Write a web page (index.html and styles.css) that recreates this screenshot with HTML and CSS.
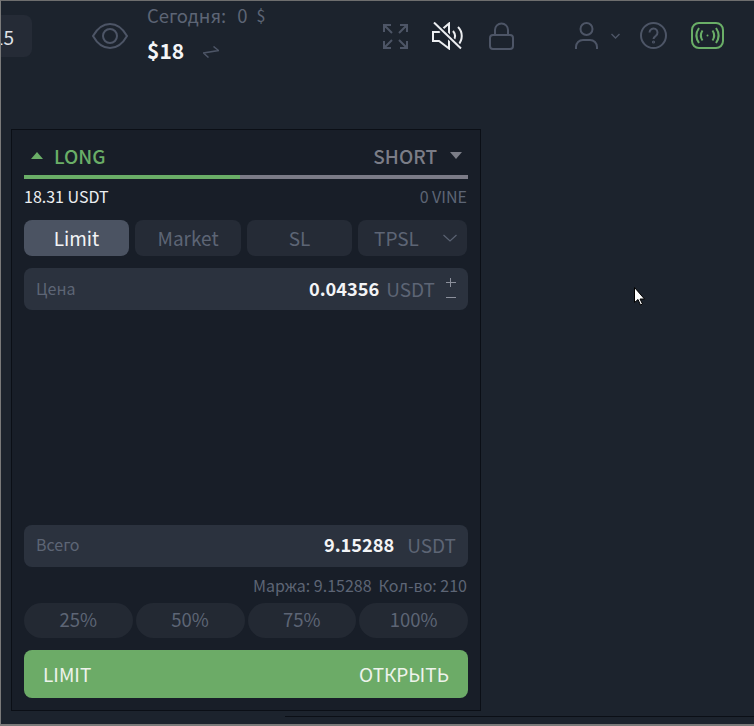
FILE: index.html
```html
<!DOCTYPE html>
<html lang="ru">
<head>
<meta charset="utf-8">
<title>Trade</title>
<link rel="stylesheet" href="styles.css">
</head>
<body>
<div class="frame">
  <header class="topbar">
    <div class="leverage"><span>15</span></div>
    <svg class="ic-eye" width="36" height="28" viewBox="0 0 36 28" fill="none" stroke="#4d5566" stroke-width="2"><path d="M1 14C5.500 6 11.500 2 18 2s12.500 4 17 12C30.500 22 24.500 26 18 26S5.500 22 1 14z"/><circle cx="18" cy="14" r="7"/></svg>
    <div class="stats">
      <div class="today"><span>Сегодня:</span><span class="today-val">0</span><span class="today-cur">$</span></div>
      <div class="balance"><span>$18</span>
        <svg width="16" height="12" viewBox="0 0 16 12" fill="none" stroke="#4d5566" stroke-width="1.500"><path d="M10.500.500l5 4-15 2.500 5 4.500"/></svg>
      </div>
    </div>
    <div class="tools">
      <svg width="25" height="25" viewBox="0 0 25 25" fill="none" stroke="#4d5566" stroke-width="2"><path d="M1 8V1h7M1 1l8 8M17 1h7v7M24 1l-8 8M1 17v7h7M1 24l8-8M24 17v7h-7M24 24l-8-8"/></svg>
      <svg class="ic-sound" width="33" height="28" viewBox="0 0 33 28" fill="none" stroke="#eceef1" stroke-width="2"><path d="M1 10h6L17 1.500v25L7 19H1z"/><path d="M21 9c2.500 3 2.500 7 0 10M26 5c5 5 5 13 0 18"/><path d="M2 .5l27 26" stroke="#1c232e" stroke-width="5"/><path d="M2 .5l27 26"/></svg>
      <svg width="25" height="28" viewBox="0 0 25 28" fill="none" stroke="#4d5566" stroke-width="2"><rect x="1" y="13" width="23" height="14" rx="3"/><path d="M6 13V8a6.500 6.500 0 0 1 13 0v5"/></svg>
    </div>
    <div class="account">
      <svg width="23" height="27" viewBox="0 0 23 27" fill="none" stroke="#4d5566" stroke-width="2"><circle cx="11.500" cy="7" r="6"/><path d="M1 27v-2a7 7 0 0 1 7-7h7a7 7 0 0 1 7 7v2"/></svg>
      <svg class="ic-caret" width="9" height="6" viewBox="0 0 9 6" fill="none" stroke="#4d5566" stroke-width="1.400"><path d="M.5 1l4 4 4-4"/></svg>
    </div>
    <svg class="ic-help" width="27" height="27" viewBox="0 0 27 27" fill="none" stroke="#4d5566" stroke-width="2"><circle cx="13.500" cy="13.500" r="12.500"/><path d="M9.500 10.500a4 4 0 1 1 6.300 3.300c-1.500 1-2.300 1.700-2.300 3.200"/><circle cx="13.500" cy="20" r=".6"/></svg>
    <svg class="ic-signal" width="33" height="27" viewBox="0 0 33 27" fill="none" stroke="#6aae67" stroke-width="2"><rect x="1" y="1" width="31" height="25" rx="7"/><path d="M11.500 8.500c-2 3-2 7 0 10M21.500 8.500c2 3 2 7 0 10M8 6c-3.500 5-3.500 10 0 15M25 6c3.500 5 3.500 10 0 15"/><circle cx="16.500" cy="13.500" r="1" fill="#6aae67" stroke="none"/></svg>
  </header>

  <section class="panel">
    <div class="sides">
      <div class="side side-long"><svg width="12" height="7" viewBox="0 0 12 7"><path d="M6 0l6 7H0z" fill="#6aae67"/></svg><span>LONG</span></div>
      <div class="side side-short"><span>SHORT</span><svg width="12" height="7" viewBox="0 0 12 7"><path d="M0 0h12L6 7z" fill="#7b7d87"/></svg></div>
    </div>
    <div class="ratio"><div class="ratio-fill"></div></div>
    <div class="funds"><span class="funds-long">18.31 USDT</span><span class="funds-short">0 VINE</span></div>
    <div class="types">
      <div class="type type-active">Limit</div>
      <div class="type">Market</div>
      <div class="type">SL</div>
      <div class="type type-more"><span>TPSL</span><svg width="14" height="8" viewBox="0 0 14 8" fill="none" stroke="#5a6272" stroke-width="1.200"><path d="M.5 1L7 7l6.500-6"/></svg></div>
    </div>
    <div class="field">
      <span class="field-label">Цена</span>
      <span class="field-value">0.04356</span>
      <span class="field-unit">USDT</span>
      <span class="stepper"><i class="plus"></i><i class="minus"></i></span>
    </div>
    <div class="spacer"></div>
    <div class="field field-total">
      <span class="field-label">Всего</span>
      <span class="field-value">9.15288</span>
      <span class="field-unit">USDT</span>
    </div>
    <div class="info"><span>Маржа: 9.15288</span><span>Кол-во: 210</span></div>
    <div class="percents">
      <div class="pct">25%</div>
      <div class="pct">50%</div>
      <div class="pct">75%</div>
      <div class="pct">100%</div>
    </div>
    <button class="submit" type="button"><span>LIMIT</span><span>ОТКРЫТЬ</span></button>
  </section>
  <div class="foot-line"></div>
</div>
<svg class="cursor" width="12" height="19" viewBox="0 0 12 19"><path d="M.5.500v15l3.500-3 2.500 5.500 2-1-2.500-5h4.500z" fill="#fff" stroke="#000" stroke-width="1"/></svg>
</body>
</html>
```
FILE: styles.css
```css
* { box-sizing: border-box; }
html, body { margin: 0; padding: 0; }
body {
  width: 754px;
  height: 726px;
  overflow: hidden;
  position: relative;
  background: #1c232d;
  font-family: "Noto Sans CJK SC", "Noto Sans", sans-serif;
  color: #5d6575;
}
.frame {
  height: 726px;
  border-top: 1px solid #6e6e6e;
  border-left: 1px solid #7a7a7a;
  border-bottom: 2px solid #7a7a7a;
  display: flex;
  flex-direction: column;
  overflow: hidden;
}
.topbar {
  height: 128px;
  flex: none;
  display: flex;
  align-items: flex-start;
  padding-right: 30px;
}
.leverage {
  flex: none;
  width: 61px;
  height: 42px;
  margin: 14px 0 0 -30px;
  background: #252b36;
  border-radius: 8px;
  display: flex;
  align-items: center;
  justify-content: flex-end;
  padding-right: 18px;
  color: #dfe2e7;
  font-size: 19px;
}
.ic-eye { flex: none; margin: 21px 0 0 60px; }
.stats { margin: 1px 0 0 19px; width: 236px; flex: none; }
.today { display: flex; font-size: 18.500px; line-height: 26px; color: #5d6575; }
.today-val { margin-left: 11px; }
.today-cur { margin-left: 9px; font-size: 16px; }
.balance { display: flex; align-items: center; margin-top: 8px; font-size: 21px; line-height: 28px; font-weight: 700; color: #f3f4f6; }
.balance svg { margin: 3px 0 0 19px; }
.tools { flex: none; display: flex; align-items: center; gap: 24px; margin-top: 21px; }
.account { flex: none; display: flex; align-items: center; margin: 21px 0 0 61px; }
.ic-caret { margin-left: 13px; }
.ic-help { flex: none; margin: 21px 0 0 20px; }
.ic-signal { flex: none; margin: 21px 0 0 24px; }

.panel {
  margin-left: 10px;
  width: 470px;
  height: 582px;
  flex: none;
  background: #181e28;
  border: 1px solid #0b0f16;
  padding: 0 12px 12px;
  display: flex;
  flex-direction: column;
}
.sides {
  height: 45px;
  flex: none;
  display: flex;
  justify-content: space-between;
  align-items: center;
  padding: 6px 6px 0 7px;
  font-size: 19px;
  font-weight: 500;
}
.side { display: flex; align-items: center; }
.side-long { color: #6aae67; gap: 11px; }
.side-short { color: #7b7d87; gap: 13px; }
.ratio { height: 4px; flex: none; background: #7b7b87; }
.ratio-fill { width: 216px; height: 4px; background: #6aae67; }
.funds {
  flex: none;
  margin-top: 8px;
  height: 18px;
  display: flex;
  justify-content: space-between;
  align-items: center;
  padding-right: 1px;
  font-size: 16px;
}
.funds-long { color: #eceef1; }
.funds-short { color: #5d6575; }
.types { flex: none; margin-top: 15px; display: flex; gap: 6px; }
.type {
  flex: 0 0 105px;
  height: 36px;
  border-radius: 8px;
  background: #252b36;
  display: flex;
  align-items: center;
  justify-content: center;
  font-size: 19px;
  color: #5d6575;
  padding-bottom: 1px;
}
.type:nth-child(2) { flex-basis: 106px; }
.type-active { background: #4b5362; color: #f3f4f6; }
.type-more { flex-basis: 109px; justify-content: space-between; padding: 0 10px 1px 16px; }
.field {
  flex: none;
  margin-top: 12px;
  height: 42px;
  border-radius: 8px;
  background: #2b323e;
  display: flex;
  align-items: center;
  padding: 0 12px 2px 12px;
}
.field-label { font-size: 16px; color: #5d6575; margin-right: auto; }
.field-value { font-size: 18.200px; font-weight: 700; color: #f3f4f6; }
.field-unit { font-size: 19px; color: #5d6575; margin-left: 7px; }
.stepper { width: 10px; height: 22px; margin: 2px 0 0 11px; position: relative; }
.stepper .plus, .stepper .minus { display: block; position: absolute; left: 0; width: 10px; }
.stepper .plus { top: 0; height: 9px; }
.stepper .minus { top: 19px; height: 1px; background: #8c909c; }
.plus::before, .plus::after { content: ""; position: absolute; background: #8c909c; }
.plus::before { left: 0; top: 4px; width: 10px; height: 1px; }
.plus::after { left: 4px; top: 0; width: 1px; height: 9px; }
.spacer { flex: 1 1 auto; }
.field-total { padding: 0 12px 4px 12px; }
.field-total .field-unit { margin-left: 13px; }
.info {
  flex: none;
  margin-top: 10px;
  height: 18px;
  display: flex;
  justify-content: flex-end;
  gap: 7px;
  align-items: center;
  padding: 0 1px 3px 0;
  font-size: 16px;
  color: #5d6575;
}
.percents { flex: none; margin-top: 8px; display: flex; gap: 3px; }
.pct {
  flex: 1 1 0;
  height: 35px;
  border-radius: 18px;
  background: #232933;
  display: flex;
  align-items: center;
  justify-content: center;
  font-size: 18.500px;
  color: #5d6575;
  padding-bottom: 3px;
}
.submit {
  flex: none;
  margin-top: 12px;
  height: 48px;
  width: 100%;
  border: 0;
  border-radius: 8px;
  background: #6cab67;
  color: #eef3ec;
  font: 19px "Noto Sans CJK SC", "Noto Sans", sans-serif;
  display: flex;
  align-items: center;
  justify-content: space-between;
  padding: 0 19px 2px;
}
.foot-line {
  flex: none;
  margin: 5px 0 0 284px;
  height: 1px;
  background: #0b0f16;
}
.cursor { position: absolute; left: 634px; top: 287px; }
```
